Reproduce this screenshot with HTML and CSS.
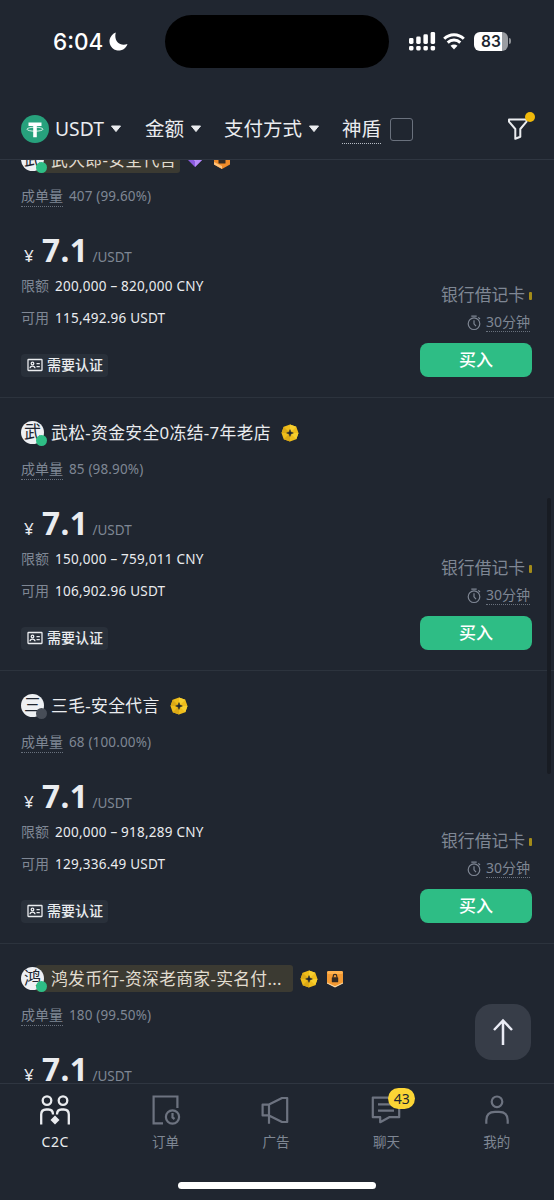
FILE: index.html
```html
<!DOCTYPE html>
<html lang="zh-CN">
<head>
<meta charset="utf-8">
<title>C2C</title>
<link rel="stylesheet" href="styles.css">
</head>
<body>
<svg class="defs" width="0" height="0">
  <symbol id="caret" viewBox="0 0 12 8"><path d="M1.5 1h9L6 6.6z" fill="currentColor" stroke="currentColor" stroke-linejoin="round"/></symbol>
  <symbol id="gold" viewBox="0 0 18 18">
    <path d="M9 .5 15.300 2.700 17.500 9 15.300 15.300 9 17.600 2.700 15.300 .5 9 2.700 2.700z" fill="#efbd1b"/>
    <path d="M9 .5 15.300 2.700 9 9zM17.500 9 15.300 15.300 9 9z" fill="#f8cf2e"/>
    <path d="M.5 9 2.700 2.700 9 9zM9 17.600 2.700 15.300 9 9z" fill="#dca915"/>
    <path d="M9 5.600 9.900 8.100 12.400 9 9.900 9.900 9 12.400 8.100 9.900 5.600 9 8.100 8.100z" fill="#202630" stroke="#202630" stroke-width=".5"/>
  </symbol>
  <symbol id="lock" viewBox="0 0 18 18">
    <path d="M1 2.500Q1 1 2.500 1h13Q17 1 17 2.500V13L9 17 1 13z" fill="#f49a33"/>
    <path d="M1 2.500Q1 1 2.500 1h13Q17 1 17 2.500L16 4H2z" fill="#ffb24f"/>
    <path d="M1 12.500 9 16.200 17 12.500V13.500L9 17.400 1 13.500z" fill="#ffe0ae"/>
    <rect x="5.800" y="7.300" width="6.400" height="5" rx=".6" fill="#342a22"/>
    <path d="M7.200 7.500V6.200a1.800 1.800 0 0 1 3.600 0v1.300" fill="none" stroke="#342a22" stroke-width="1.200"/>
  </symbol>
  <symbol id="hexlock" viewBox="0 0 18 18">
    <path d="M9 0 17 4v9.500L9 18 1 13.500V4z" fill="#f08c2a"/>
    <path d="M1 11l8 4v3l-8-4.500z" fill="#ffc27a"/>
    <rect x="5.500" y="6" width="7" height="6.500" rx=".6" fill="#342a22"/>
  </symbol>
  <symbol id="idcard" viewBox="0 0 16 14">
    <g fill="none" stroke="currentColor" stroke-width="1.300"><rect x="1" y="1.500" width="14" height="11" rx=".5"/><circle cx="5.500" cy="5.500" r="1.300"/><path d="M3 10.300c.2-3 4.800-3 5 0M9.500 5.700h3.300M9.500 8.700h3.300"/></g>
  </symbol>
  <symbol id="timer" viewBox="0 0 14 16">
    <g fill="none" stroke="currentColor" stroke-width="1.200"><circle cx="7" cy="8.700" r="5.800"/><path d="M4.300 1.100h5.400M11.300 2.300l1.700 1.700M7 5.300v3.500l2 2.300"/></g>
  </symbol>
</svg>
<div class="screen">
  <header class="status">
    <div class="clock">6:04
      <svg width="19" height="19" viewBox="0 0 19 19"><path d="M6.800.6A9.200 9.200 0 1 0 18.500 12 C10.500 15 4.500 8.500 6.800.6z" fill="#fff"/></svg>
    </div>
    <div class="island"></div>
    <div class="signals">
      <svg width="27" height="19" viewBox="0 0 27 19" fill="#fff"><rect x="0" y="6" width="4.500" height="6" rx="1.400"/><rect x="7.200" y="4.500" width="4.500" height="7.500" rx="1.400"/><rect x="14.400" y="2.300" width="4.500" height="9.700" rx="1.400"/><rect x="21.600" y="0" width="4.500" height="12" rx="1.400"/><rect x="0" y="14" width="4.500" height="4.500" rx="1.400"/><rect x="7.200" y="14" width="4.500" height="4.500" rx="1.400"/><rect x="14.400" y="14" width="4.500" height="4.500" rx="1.400"/><rect x="21.600" y="14" width="4.500" height="4.500" rx="1.400"/></svg>
      <svg class="wifi" width="22" height="17" viewBox="0 0 22 17"><path d="M1.200 5.800C6.600.3 15.400.3 20.800 5.800M4.700 9.600c3.500-3.500 9.100-3.500 12.600 0" fill="none" stroke="#fff" stroke-width="2.900"/><path d="M7.500 12.700c2-1.700 5-1.700 7 0L11 16.500z" fill="#fff"/></svg>
      <div class="battery">83</div><i class="nub"></i>
    </div>
  </header>

  <nav class="filters">
    <svg class="coin" width="28" height="28" viewBox="0 0 28 28"><circle cx="14" cy="14" r="14" fill="#27a17c"/><path d="M7.500 7.500h13v3.500h-4.700v11.300h-3.600V11H7.500z" fill="#fff"/><ellipse cx="14" cy="14.200" rx="8" ry="2" fill="none" stroke="#fff" stroke-width=".8"/></svg>
    <span class="f-usdt">USDT</span><svg class="caret c1"><use href="#caret"/></svg>
    <span>金额</span><svg class="caret c2"><use href="#caret"/></svg>
    <span>支付方式</span><svg class="caret c3"><use href="#caret"/></svg>
    <span class="shield">神盾</span><i class="check"></i>
    <div class="funnel"><svg width="22" height="24" viewBox="0 0 22 24"><path d="M2 2.500h17.500v2.200L13.300 12v7.800l-5 2V12L2 4.700z" fill="none" stroke="#eaecef" stroke-width="2" stroke-linejoin="round"/></svg><i></i></div>
  </nav>

  <main class="list">
    <article class="card first">
      <div class="name"><div class="avatar">武<i></i></div><b class="tagged">武大郎-安全代言</b>
        <svg class="gem" width="20" height="18" viewBox="0 0 20 18"><path d="M4 1h12l4 6-10 10L0 7z" fill="#8b5be0"/><path d="M10 11 17 5l3 2-10 10z" fill="#b78bfa"/><path d="M5 5h10l-5 6z" fill="#e5d8ff"/></svg>
        <svg class="badge" width="18" height="18"><use href="#hexlock"/></svg></div>
      <div class="vol"><u>成单量</u>407 (99.60%)</div>
      <div class="body">
        <div class="info"><div class="price"><span>¥</span><strong>7.1</strong><small>/USDT</small></div>
          <div class="line"><em>限额</em>200,000 – 820,000 CNY</div>
          <div class="line"><em>可用</em>115,492.96 USDT</div>
          <div class="verify"><svg width="16" height="14"><use href="#idcard"/></svg>需要认证</div></div>
        <div class="buy"><div class="pay">银行借记卡<i></i></div><div class="time"><svg width="14" height="16"><use href="#timer"/></svg><u>30分钟</u></div><button>买入</button></div>
      </div>
    </article>
    <article class="card">
      <div class="name"><div class="avatar">武<i></i></div><b>武松-资金安全0冻结-7年老店</b><svg class="badge" width="18" height="18"><use href="#gold"/></svg></div>
      <div class="vol"><u>成单量</u>85 (98.90%)</div>
      <div class="body">
        <div class="info"><div class="price"><span>¥</span><strong>7.1</strong><small>/USDT</small></div>
          <div class="line"><em>限额</em>150,000 – 759,011 CNY</div>
          <div class="line"><em>可用</em>106,902.96 USDT</div>
          <div class="verify"><svg width="16" height="14"><use href="#idcard"/></svg>需要认证</div></div>
        <div class="buy"><div class="pay">银行借记卡<i></i></div><div class="time"><svg width="14" height="16"><use href="#timer"/></svg><u>30分钟</u></div><button>买入</button></div>
      </div>
    </article>
    <article class="card">
      <div class="name"><div class="avatar off">三<i></i></div><b>三毛-安全代言</b><svg class="badge" width="18" height="18"><use href="#gold"/></svg></div>
      <div class="vol"><u>成单量</u>68 (100.00%)</div>
      <div class="body">
        <div class="info"><div class="price"><span>¥</span><strong>7.1</strong><small>/USDT</small></div>
          <div class="line"><em>限额</em>200,000 – 918,289 CNY</div>
          <div class="line"><em>可用</em>129,336.49 USDT</div>
          <div class="verify"><svg width="16" height="14"><use href="#idcard"/></svg>需要认证</div></div>
        <div class="buy"><div class="pay">银行借记卡<i></i></div><div class="time"><svg width="14" height="16"><use href="#timer"/></svg><u>30分钟</u></div><button>买入</button></div>
      </div>
    </article>
    <article class="card last">
      <div class="name"><div class="avatar">鸿<i></i></div><b class="tagged wide">鸿发币行-资深老商家-实名付...</b><svg class="badge near" width="18" height="18"><use href="#gold"/></svg><svg class="badge near" width="18" height="18"><use href="#lock"/></svg></div>
      <div class="vol"><u>成单量</u>180 (99.50%)</div>
      <div class="body">
        <div class="info"><div class="price"><span>¥</span><strong>7.1</strong><small>/USDT</small></div></div>
      </div>
    </article>
  </main>

  <footer class="tabs">
    <div class="tab on"><svg width="32" height="32" viewBox="0 0 32 32" fill="none" stroke="currentColor" stroke-width="2.300"><circle cx="8" cy="6.600" r="4.300"/><circle cx="24" cy="6.600" r="4.300"/><path d="M2.200 30.500V20.500q0-5 5-5h2.300q4.500 0 4.500 5M29.800 30.500V20.500q0-5-5-5h-2.300q-4.500 0-4.500 5"/><path d="M16 21.500l4.500 4.500-4.500 4.500-4.500-4.500z" fill="currentColor" stroke="none"/></svg>C2C</div>
    <div class="tab"><svg width="32" height="32" viewBox="0 0 32 32" fill="none" stroke="currentColor" stroke-width="2.200"><path d="M13 29.300H3.600V2.500h23.800V14"/><circle cx="22.500" cy="23" r="6.600"/><path d="M22.500 19v4.500l2 1.500"/></svg>订单</div>
    <div class="tab"><svg width="32" height="32" viewBox="0 0 32 32" fill="none" stroke="currentColor" stroke-width="2.200" stroke-linejoin="round"><path d="M9 10.600H2.600v10.800H9M9 10.600 22 4h5.200v24H22L9 21.400M9 9.500v20.300"/></svg>广告</div>
    <div class="tab"><svg width="32" height="32" viewBox="0 0 32 32" fill="none" stroke="currentColor" stroke-width="2.200" stroke-linejoin="round"><path d="M2.800 3.600h26.400v19.600H19.200l-9 5v-5H2.800zM8 10.300h13M8 16.700h16"/></svg><i class="count">43</i>聊天</div>
    <div class="tab"><svg width="32" height="32" viewBox="0 0 32 32" fill="none" stroke="currentColor" stroke-width="2.200"><circle cx="16" cy="7.800" r="5.300"/><path d="M5.300 29.800v-3.500q0-8.500 8.700-8.500h4q8.700 0 8.700 8.500v3.500"/></svg>我的</div>
    <i class="home"></i>
  </footer>
  <div class="totop"><svg width="22" height="28" viewBox="0 0 22 28"><path d="M11 27V3M2 12l9-9.500 9 9.500" fill="none" stroke="#eaecf5" stroke-width="2.500"/></svg></div>
  <i class="scrollbar"></i>
</div>
</body>
</html>
```

FILE: styles.css
```css
* { box-sizing: border-box; }
body { margin: 0; background: #202630; font-family: "Noto Sans", "Noto Sans CJK SC", sans-serif; color: #eaecef; }
i, em { font-style: normal; }
u { text-decoration: none; }
.defs { position: absolute; }
.screen { position: relative; width: 554px; height: 1200px; overflow: hidden; display: flex; flex-direction: column; }

.status { height: 84px; flex: none; display: flex; align-items: flex-start; padding: 15px 0 0 53px; font-family: Inter, sans-serif; }
.clock { width: 112px; display: flex; align-items: center; gap: 6px; height: 52px; font-size: 22.500px; font-weight: 500; color: #fff; }
.island { width: 224px; height: 53px; border-radius: 27px; background: #000; }
.signals { display: flex; align-items: center; height: 52px; margin-left: 20px; }
.wifi { margin-left: 7px; }
.battery { width: 34px; height: 19px; margin-left: 9px; border-radius: 6px; background: linear-gradient(90deg, #fff 82%, #9a9da2 82%); color: #202630; font-size: 15.500px; font-weight: 600; line-height: 19px; padding-left: 7px; }
.nub { width: 2px; height: 6px; margin-left: 1px; border-radius: 0 3px 3px 0; background: #8b8f94; }

.filters { height: 76px; flex: none; display: flex; align-items: center; padding: 15px 23px 0 21px; border-bottom: 1px solid #2f3641; font-size: 19.500px; }
.filters span { line-height: 30px; white-space: nowrap; }
.filters .f-usdt { margin-left: 6px; font-size: 19.300px; }
.caret { width: 12px; height: 8px; margin-left: 6px; flex: none; }
.c1 { margin-right: 23px; }
.c2 { margin-right: 22px; }
.c3 { margin-right: 22px; }
.filters .shield { height: 29px; line-height: 28px; border-bottom: 1px dotted #b7bdc6; }
.check { width: 23px; height: 23px; margin-left: 9px; border: 1.500px solid #6a717d; border-radius: 3px; }
.funnel { position: relative; margin-left: auto; width: 24px; height: 24px; }
.funnel i { position: absolute; left: 18px; top: -5px; width: 10px; height: 10px; border-radius: 50%; background: #f0b90b; }

.list { height: 923px; flex: none; overflow: hidden; }
.card { height: 273px; padding: 20px 22px 0 21px; border-bottom: 1px solid #2c333d; }
.first { margin-top: -35px; }
.name { display: flex; align-items: center; height: 28px; font-size: 16.800px; }
.name b { font-weight: 400; white-space: nowrap; padding-left: 7px; line-height: 27px; letter-spacing: .36px; }
.avatar { position: relative; width: 23px; height: 23px; margin-top: 1px; border-radius: 50%; background: #eef0f3; color: #202630; font-size: 17px; line-height: 22px; display: flex; justify-content: center; }
.avatar i { position: absolute; left: 15px; top: 14px; width: 11px; height: 11px; border-radius: 50%; background: #2ebd85; }
.avatar.off i { background: #474d57; }
.name .tagged { background: #3b3a32; padding: 0 3px 0 15px; margin-left: -8px; border-radius: 3px; color: #e2ddd0; }
.name .wide { width: 257px; letter-spacing: .3px; }
.name .avatar { z-index: 1; flex: none; }
.badge { margin: 1px 0 0 10px; }
.badge.near { margin-left: 7px; }
.badge.near + .near { margin-left: 8px; }
.gem { margin-left: 5px; }
.gem + .badge { margin-left: 8px; }
.vol { display: flex; align-items: center; height: 28px; margin-top: 9px; font-size: 13.500px; letter-spacing: .15px; color: #7f8794; }
.vol u { font-size: 14px; letter-spacing: 0; line-height: 20px; margin-right: 6px; border-bottom: 1px dotted #69717d; }
.body { display: flex; justify-content: space-between; }
.price { height: 42px; margin-top: 19px; display: flex; align-items: baseline; line-height: 42px; }
.price span { width: 21px; padding-left: 3px; font-size: 17px; }
.price strong { font-size: 31.500px; letter-spacing: .5px; }
.price small { font-size: 13.500px; color: #7f8794; margin-left: 4px; }
.line { height: 24px; margin-top: 3px; display: flex; align-items: center; font-size: 13.500px; letter-spacing: .24px; white-space: nowrap; }
.line + .line { margin-top: 8px; }
.line em { width: 34px; font-size: 14px; line-height: 20px; letter-spacing: 0; color: #7f8794; }
.verify { margin-top: 24px; width: 87px; height: 23px; border-radius: 4px; background: #29303a; display: flex; align-items: center; padding: 0 0 3px 6px; gap: 4px; font-size: 14px; font-weight: 500; white-space: nowrap; }
.verify svg { position: relative; top: 1px; }
.buy { width: 112px; padding-top: 73px; display: flex; flex-direction: column; align-items: flex-end; color: #7f8794; }
.pay { height: 24px; display: flex; align-items: center; font-size: 16.800px; line-height: 22px; white-space: nowrap; }
.pay i { width: 3px; height: 8px; border-radius: 1px; background: #a38b19; margin: 2px 0 0 4px; }
.time { display: flex; align-items: center; height: 21px; margin-top: 5px; gap: 5px; font-size: 14px; padding-right: 2px; }
.time u { line-height: 18px; border-bottom: 1px dotted #69717d; }
.buy button { width: 112px; height: 34px; margin-top: 10px; border: 0; border-radius: 8px; background: #2ebd85; color: #fff; font: 500 17px "Noto Sans", "Noto Sans CJK SC", sans-serif; padding: 0; line-height: 32px; }

.tabs { position: relative; height: 117px; flex: none; display: flex; background: #202630; border-top: 1px solid #2f3641; padding: 10px 2px 0 0; }
.tab { position: relative; flex: 1; display: flex; flex-direction: column; align-items: center; font-size: 13.500px; line-height: 24px; color: #7f8794; }
.tab svg { margin-bottom: 4px; color: #6d7380; }
.tab.on, .tab.on svg { color: #eaecef; }
.tab.on { font-size: 14px; letter-spacing: .5px; }
.count { position: absolute; left: 57px; top: -6px; width: 27px; height: 21px; border-radius: 11px; background: #fcd535; color: #202630; font-size: 14px; line-height: 21px; text-align: center; }
.home { position: absolute; left: 178px; top: 98px; width: 198px; height: 7px; border-radius: 4px; background: #fff; }
.totop { position: absolute; left: 475px; top: 1004px; width: 56px; height: 56px; border-radius: 17px; background: #373d48; display: flex; align-items: center; justify-content: center; }
.scrollbar { position: absolute; right: 3px; top: 498px; width: 4px; height: 276px; border-radius: 2px; background: #181c23; }
```
